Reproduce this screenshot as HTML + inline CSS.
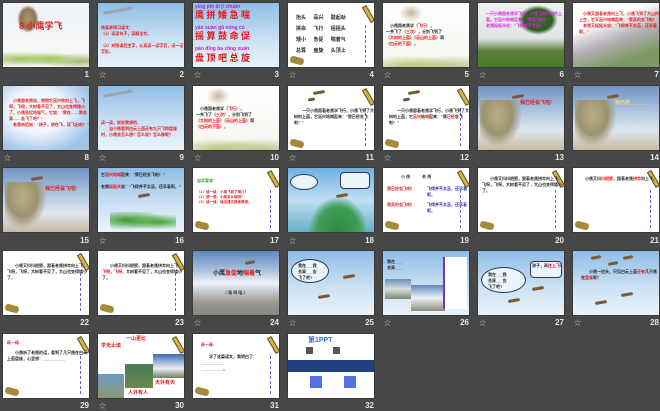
<!DOCTYPE html>
<html><head><meta charset="utf-8"><style>
*{margin:0;padding:0;box-sizing:border-box}
body{width:660px;height:410px;background:#474747;position:relative;overflow:hidden;font-family:"Liberation Sans","Noto Sans CJK SC",sans-serif}
.s{position:absolute;width:86px;height:64px;overflow:hidden;background:#fff;box-shadow:0 0 0 1px #3a3a3a}
.n{position:absolute;width:86px;text-align:right;color:#e6e6e6;font-size:8px;font-weight:bold}
.st{position:absolute;color:#cfcfcf;font-size:7px}
.sky{background:linear-gradient(#8fbde6,#cfe3f4 60%,#e9f3fb)}
.tree{background:linear-gradient(#6f93c2,#b6cce3 45%,#dfe6ee 70%,#c9b9a3)}
.t{position:absolute;font-size:4px;line-height:6px;font-weight:bold}
.p{position:absolute;right:3px;top:2px;width:5px;height:18px;background:#d8b33c;transform:rotate(-30deg);border:1px solid #553}
.q{position:absolute;right:6px;top:22px;width:3px;height:38px;border-left:1px dashed #7a5bd6}
.f{position:absolute;left:2px;bottom:3px;width:14px;height:7px;background:#a58a3a;border-radius:3px;transform:rotate(15deg)}
.b{position:absolute;width:12px;height:3px;background:#7a5a38;border-radius:2px;transform:rotate(-10deg)}
.g{position:absolute;left:0;bottom:0;width:86px;height:14px;background:radial-gradient(ellipse at 30% 100%,#b6c67a,transparent 60%),radial-gradient(ellipse at 80% 100%,#b9c78a,transparent 60%)}
.tr{position:absolute;left:2px;top:14px;width:44px;height:50px;background:radial-gradient(ellipse at 40% 30%,#b9ae84 0,#9c9370 40%,transparent 65%)}
</style></head><body>

<!-- Row 1 -->
<div class="s" style="left:3px;top:3px;background:linear-gradient(#eef3f8,#f8f8f6)"><div style="position:absolute;left:14px;top:2px;width:22px;height:28px;background:radial-gradient(#b09a70,#8d7550 50%,transparent 70%)"></div><div class="t" style="left:16px;top:18px;font-size:9px;line-height:10px;color:#e02020">8 小鹰学飞</div><div class="g" style="height:20px;background:radial-gradient(ellipse at 20% 60%,#9fc25a,transparent 45%),radial-gradient(ellipse at 55% 60%,#a7c765,transparent 40%),radial-gradient(ellipse at 90% 70%,#9fb96a,transparent 40%)"></div></div>
<div class="n" style="left:3px;top:70px">1</div>

<div class="s sky" style="left:98px;top:3px"><div class="b" style="left:5px;top:6px;width:30px;background:#9aa5b0"></div><div class="t" style="left:3px;top:22px;color:#e01818">按要求预习课文：<br>（1）读读句子，读顺全文。<br><br>（2）对照课后生字，认真读一读字音，记一记字形。</div></div>
<div class="n" style="left:98px;top:70px">2</div><div class="st" style="left:99px;top:70px">☆</div>

<div class="s sky" style="left:193px;top:3px"><div class="t" style="left:2px;top:1px;font-size:5px;line-height:7px;color:#c020d0">yīng pīn ǎi jí chuǎn</div><div class="t" style="left:2px;top:7px;font-size:9px;line-height:10px;color:#e01818">鹰 拼 矮 急 喘</div><div class="t" style="left:2px;top:22px;font-size:5px;color:#c020d0">yáo suàn gǔ míng cù</div><div class="t" style="left:2px;top:28px;font-size:9px;line-height:10px;color:#e01818">摇 算 鼓 命 促</div><div class="t" style="left:2px;top:43px;font-size:5px;color:#c020d0">pán dǐng ba zǒng xuán</div><div class="t" style="left:2px;top:50px;font-size:9px;line-height:10px;color:#e01818">盘 顶 吧 总 旋</div></div>
<div class="n" style="left:193px;top:70px">3</div><div class="st" style="left:194px;top:70px">☆</div>

<div class="s" style="left:288px;top:3px"><div class="p"></div><div class="q"></div><div class="f"></div><div class="t" style="left:8px;top:10px;font-size:5px;line-height:11px;color:#222;word-spacing:6px">抬头 高兴 鼓起劲<br>拼命 飞行 摇摇头<br>矮小 急促 喘着气<br>总算 盘旋 头顶上</div></div>
<div class="n" style="left:288px;top:70px">4</div><div class="st" style="left:289px;top:70px">☆</div>

<div class="s" style="left:383px;top:3px;background:linear-gradient(#fff,#f6f6ee)"><div style="position:absolute;left:15px;top:0;width:26px;height:20px;background:radial-gradient(#c8b89a,transparent 65%)"></div><div class="t" style="left:3px;top:20px;color:#222">　小鹰跟老鹰学（<span style="color:red">飞行</span>），<br>一共飞了（<span style="color:red">三次</span>），分别飞到了<br>（<span style="color:red">大树的上面</span>）（<span style="color:red">高山的上面</span>）和<br>（<span style="color:red">白云的下面</span>）。</div><div class="g"></div></div>
<div class="n" style="left:383px;top:70px">5</div><div class="st" style="left:384px;top:70px">☆</div>

<div class="s" style="left:478px;top:3px;background:linear-gradient(#eef0f0,#dfe6e6 55%,#5c7f3c 75%,#4a7a2a)"><div style="position:absolute;left:40px;top:2px;width:40px;height:30px;background:radial-gradient(#3f6a30,#2f5a25 50%,transparent 70%)"></div><div class="t" style="left:8px;top:8px;color:#e020e0">一只小鹰跟老鹰学飞行，小鹰飞到大树的上面，它高兴地喊起来："我会飞啦！"<br>老鹰摇摇头说："飞得并不太高！"</div></div>
<div class="n" style="left:478px;top:70px">6</div><div class="st" style="left:479px;top:70px">☆</div>

<div class="s" style="left:573px;top:3px;background:linear-gradient(160deg,#fff 30%,#b6b0b8 55%,#7d9a62 80%)"><div class="t" style="left:6px;top:8px;color:#e01818">　小鹰又跟着老鹰向上飞。小鹰飞到了大山的上空，它又高兴地喊起来："我真的会飞啦！"<br>　老鹰又摇摇头说："飞得并不太高，还早着呢。"</div></div>
<div class="n" style="left:573px;top:70px">7</div><div class="st" style="left:574px;top:70px">☆</div>

<!-- Row 2 -->
<div class="s" style="left:3px;top:86px;background:radial-gradient(ellipse at 40% 40%,#fff 0,#eef4fb 40%,#9cc3ea 80%)"><div class="t" style="left:6px;top:12px;color:#e01818">　小鹰跟老鹰说，哦哦它高兴地向上飞，飞呀，飞呀，大树看不见了，大山也变得矮小了。小鹰急促地喘气，它说："我在……我总算……会飞了吧？"<br>　老鹰听后说："孩子，想在飞，就飞出吧！"</div></div>
<div class="n" style="left:3px;top:153px">8</div><div class="st" style="left:4px;top:153px">☆</div>

<div class="s sky" style="left:98px;top:86px"><div class="b" style="left:5px;top:6px;width:30px;background:#9aa5b0"></div><div class="t" style="left:3px;top:34px;color:#e01818">读一读，说说我想的。<br>　　当小鹰看到白云上面还有九只飞翔盘旋时，小鹰会怎么想？怎么说？怎么做呢？</div></div>
<div class="n" style="left:98px;top:153px">9</div><div class="st" style="left:99px;top:153px">☆</div>

<div class="s" style="left:193px;top:86px;background:linear-gradient(#fff,#f6f6ee)"><div style="position:absolute;left:12px;top:0;width:26px;height:20px;background:radial-gradient(#c8b89a,transparent 65%)"></div><div class="t" style="left:3px;top:20px;color:#222">　小鹰跟老鹰学（<span style="color:red">飞行</span>），<br>一共飞了（<span style="color:red">三次</span>），分别飞到了<br>（<span style="color:red">大树的上面</span>）（<span style="color:red">高山的上面</span>）和<br>（<span style="color:red">白云的下面</span>）。</div><div class="g"></div></div>
<div class="n" style="left:193px;top:153px">10</div><div class="st" style="left:194px;top:153px">☆</div>

<div class="s" style="left:288px;top:86px"><div class="p"></div><div class="q"></div><div class="f"></div><div class="b" style="left:25px;top:5px"></div><div class="b" style="left:20px;top:12px;width:7px"></div><div class="t" style="left:6px;top:22px;color:#222">　　一只小鹰跟着老鹰学飞行。小鹰飞到了大树的上面，它高兴地喊起来："我已经会飞啦！"</div></div>
<div class="n" style="left:288px;top:153px">11</div><div class="st" style="left:289px;top:153px">☆</div>

<div class="s" style="left:383px;top:86px"><div class="p"></div><div class="q"></div><div class="f"></div><div class="b" style="left:25px;top:5px"></div><div class="b" style="left:20px;top:12px;width:7px"></div><div class="t" style="left:6px;top:22px;color:#222">　　一只小鹰跟着老鹰学飞行。小鹰飞到了大树的上面，它<span style="color:red">高兴</span>地<span style="color:red">喊</span>起来："我<span style="color:red">已经</span>会飞啦！"</div></div>
<div class="n" style="left:383px;top:153px">12</div><div class="st" style="left:384px;top:153px">☆</div>

<div class="s tree" style="left:478px;top:86px"><div class="tr"></div><div class="b" style="left:34px;top:9px"></div><div class="t" style="left:42px;top:14px;font-size:5px;color:#e01818">我已经会飞啦!</div></div>
<div class="n" style="left:478px;top:153px">13</div>

<div class="s tree" style="left:573px;top:86px"><div class="tr"></div><div class="b" style="left:34px;top:9px"></div><div class="t" style="left:42px;top:14px;font-size:5px;color:#ffe060">我已经 ______</div></div>
<div class="n" style="left:573px;top:153px">14</div>

<!-- Row 3 -->
<div class="s tree" style="left:3px;top:168px"><div class="tr"></div><div class="b" style="left:28px;top:9px"></div><div class="t" style="left:42px;top:18px;font-size:5px;color:#e01818">我已经会飞啦!</div></div>
<div class="n" style="left:3px;top:236px">15</div>

<div class="s sky" style="left:98px;top:168px"><div class="t" style="left:3px;top:4px;color:#222">它<span style="color:red">高兴地喊</span>起来："我已经会飞啦！"<br><br>老鹰<span style="color:red">摇摇头</span>说："飞得并不太高，还早着呢。"</div><div class="b" style="left:40px;top:26px"></div><div style="position:absolute;left:12px;top:44px;width:66px;height:20px;background:radial-gradient(ellipse at 25% 40%,#3d9a2c,transparent 60%),radial-gradient(ellipse at 75% 50%,#4aa836,transparent 55%)"></div></div>
<div class="n" style="left:98px;top:236px">16</div><div class="st" style="left:99px;top:236px">☆</div>

<div class="s" style="left:193px;top:168px"><div class="p"></div><div class="q"></div><div class="f"></div><div class="t" style="left:4px;top:10px;color:#3a9a2a">自学要求：</div><div class="t" style="left:4px;top:22px;font-size:3.5px;line-height:5px;color:#e01818">（1）读一读：小鹰飞到了哪儿？<br>（2）想一想：小鹰怎么喊呀？<br>（3）读一读：读出课文朗读情感。</div></div>
<div class="n" style="left:193px;top:236px">17</div>

<div class="s" style="left:288px;top:168px;background:linear-gradient(#6db0e0,#bfe0f4 50%,#68b0c8)"><div style="position:absolute;left:20px;top:28px;width:60px;height:36px;background:radial-gradient(ellipse at 50% 100%,#2f8a40 0,#3e9e56 50%,transparent 70%)"></div><div style="position:absolute;left:2px;top:6px;width:28px;height:16px;background:#eaf4fb;border:1px solid #335;border-radius:50%"></div><div style="position:absolute;left:52px;top:4px;width:30px;height:17px;background:#eaf4fb;border:1px solid #335;border-radius:4px"></div><div class="b" style="left:48px;top:26px"></div></div>
<div class="n" style="left:288px;top:236px">18</div><div class="st" style="left:289px;top:236px">☆</div>

<div class="s" style="left:383px;top:168px"><div class="p"></div><div class="q"></div><div class="f"></div><div class="t" style="left:18px;top:6px;color:#333">小 鹰　　　老 鹰</div><div class="t" style="left:4px;top:18px;color:#e01818">我已经会飞啦!</div><div class="t" style="left:44px;top:18px;color:#2a2ab0">飞得并不太高，还早着呢。</div><div class="t" style="left:4px;top:34px;color:#e01818">我真的会飞啦!</div><div class="t" style="left:44px;top:34px;color:#2a2ab0">飞得并不太高，还早着呢。</div></div>
<div class="n" style="left:383px;top:236px">19</div>

<div class="s" style="left:478px;top:168px"><div class="p"></div><div class="q"></div><div class="f"></div><div class="t" style="left:4px;top:8px;color:#222">　　小鹰又抖抖翅膀，跟着老鹰拼命向上飞。飞呀，飞呀，大树看不见了，大山也变得矮小了。</div></div>
<div class="n" style="left:478px;top:236px">20</div>

<div class="s" style="left:573px;top:168px"><div class="p"></div><div class="q"></div><div class="f"></div><div class="t" style="left:4px;top:8px;color:#222">　　小鹰又抖<span style="color:red">抖翅膀</span>，跟着老鹰<span style="color:red">拼命</span>向上飞。</div></div>
<div class="n" style="left:573px;top:236px">21</div>

<!-- Row 4 -->
<div class="s" style="left:3px;top:251px"><div class="p"></div><div class="q"></div><div class="f"></div><div class="t" style="left:4px;top:12px;color:#222">　　小鹰又抖抖翅膀，跟着老鹰拼命向上飞。飞呀，飞呀，大树看不见了，大山也变得矮小了。</div></div>
<div class="n" style="left:3px;top:318px">22</div>

<div class="s" style="left:98px;top:251px"><div class="p"></div><div class="q"></div><div class="f"></div><div class="t" style="left:4px;top:12px;color:#222">　　小鹰又抖抖翅膀，跟着老鹰拼命向上飞。<span style="color:red">飞呀，飞呀，</span>大树看不见了，大山也变得矮小了。</div></div>
<div class="n" style="left:98px;top:318px">23</div>

<div class="s" style="left:193px;top:251px;background:linear-gradient(#5d86bd,#a9c2dc 30%,#eef2f7 50%,#c2c6cc 65%,#9c9890 80%,#8a8680)"><div class="b" style="left:52px;top:10px;width:10px"></div><div class="t" style="left:20px;top:20px;font-size:6px;color:#222">小鹰<span style="color:red">急促</span>地<span style="color:red">喘着</span>气</div><div class="t" style="left:30px;top:39px;color:#333">（ 喘 呀 喘 ）</div></div>
<div class="n" style="left:193px;top:318px">24</div><div class="st" style="left:194px;top:318px">☆</div>

<div class="s sky" style="left:288px;top:251px"><div style="position:absolute;left:3px;top:8px;width:38px;height:24px;background:#eaf4fb;border:1px solid #335;border-radius:50%"></div><div class="t" style="left:10px;top:12px;color:#222">我在___我<br>总算___会<br>飞了吧?</div><div class="b" style="left:55px;top:24px"></div><div class="b" style="left:30px;top:44px"></div></div>
<div class="n" style="left:288px;top:318px">25</div><div class="st" style="left:289px;top:318px">☆</div>

<div class="s sky" style="left:383px;top:251px"><div style="position:absolute;left:2px;top:28px;width:26px;height:20px;background:linear-gradient(#6a8fb8,#d8dde0 50%,#7c8a6a)"></div><div style="position:absolute;left:28px;top:34px;width:34px;height:26px;background:linear-gradient(#5d86bd,#eef2f7 50%,#8e8a78)"></div><div style="position:absolute;left:60px;top:6px;width:24px;height:52px;background:#fff;border-left:2px solid #6a3ab0"></div><div class="t" style="left:4px;top:8px;color:#222">我在___<br>总算___</div></div>
<div class="n" style="left:383px;top:318px">26</div><div class="st" style="left:384px;top:318px">☆</div>

<div class="s sky" style="left:478px;top:251px"><div style="position:absolute;left:3px;top:16px;width:45px;height:26px;background:#eaf4fb;border:1px solid #335;border-radius:50%"></div><div class="t" style="left:10px;top:21px;color:#222">我在___我<br>总算___会<br>飞了吧?</div><div style="position:absolute;left:52px;top:10px;width:32px;height:17px;background:#eaf4fb;border:1px solid #335;border-radius:4px"></div><div class="t" style="left:54px;top:12px;color:#222">孩子，再<span style="color:red">往上飞</span>!</div><div class="b" style="left:54px;top:36px"></div><div class="b" style="left:30px;top:48px"></div></div>
<div class="n" style="left:478px;top:318px">27</div><div class="st" style="left:479px;top:318px">☆</div>

<div class="s sky" style="left:573px;top:251px"><div class="b" style="left:18px;top:5px;width:10px"></div><div class="b" style="left:50px;top:5px;width:10px"></div><div class="b" style="left:35px;top:11px;width:10px"></div><div class="t" style="left:8px;top:18px;color:#222">　　小鹰一抬头，只见白云上面<span style="color:red">还有</span>几只鹰在<span style="color:red">盘旋</span>呢！</div><div class="b" style="left:48px;top:42px"></div><div class="b" style="left:22px;top:50px"></div></div>
<div class="n" style="left:573px;top:318px">28</div><div class="st" style="left:574px;top:318px">☆</div>

<!-- Row 5 -->
<div class="s" style="left:3px;top:334px"><div class="p"></div><div class="q"></div><div class="f"></div><div class="t" style="left:4px;top:6px;color:#e01818">练一练:</div><div class="t" style="left:4px;top:16px;color:#222">　　小鹰听了老鹰的话，看到了几只鹰在白云上面盘旋，心里想：__________</div></div>
<div class="n" style="left:3px;top:401px">29</div>

<div class="s" style="left:98px;top:334px"><div class="p"></div><div class="t" style="left:3px;top:9px;font-size:5px;color:#e01818">学无止境</div><div class="t" style="left:28px;top:2px;font-size:5px;color:#e01818">一山更比</div><div style="position:absolute;left:0;top:40px;width:26px;height:24px;background:linear-gradient(#6a9ac8,#8a9a70)"></div><div style="position:absolute;left:27px;top:30px;width:28px;height:24px;background:linear-gradient(#4a7a5a,#6a8a4a)"></div><div style="position:absolute;left:55px;top:20px;width:31px;height:24px;background:linear-gradient(#3a6ab0,#e8eef4 60%,#708060)"></div><div class="t" style="left:57px;top:46px;font-size:5px;color:#e01818">天外有天</div><div class="t" style="left:30px;top:56px;font-size:5px;color:#e01818">人外有人</div></div>
<div class="n" style="left:98px;top:401px">30</div><div class="st" style="left:99px;top:401px">☆</div>

<div class="s" style="left:193px;top:334px"><div class="p"></div><div class="q"></div><div class="f"></div><div class="t" style="left:8px;top:8px;color:#e01818">练一练:</div><div class="t" style="left:8px;top:20px;color:#222">　　学了这篇课文，我明白了：__________<br>__________。</div></div>
<div class="n" style="left:193px;top:401px">31</div>

<div class="s" style="left:288px;top:334px"><div class="t" style="left:20px;top:4px;font-size:7px;color:#3a6ad0">第1PPT</div><div style="position:absolute;left:18px;top:13px;width:7px;height:7px;background:#555"></div><div style="position:absolute;left:45px;top:13px;width:7px;height:7px;background:#555"></div><div style="position:absolute;left:0;top:26px;width:86px;height:12px;background:#1e3f7a"></div><div style="position:absolute;left:22px;top:42px;width:12px;height:12px;background:#5570e0"></div><div style="position:absolute;left:56px;top:42px;width:12px;height:12px;background:#5570e0"></div></div>
<div class="n" style="left:288px;top:401px">32</div>

</body></html>
